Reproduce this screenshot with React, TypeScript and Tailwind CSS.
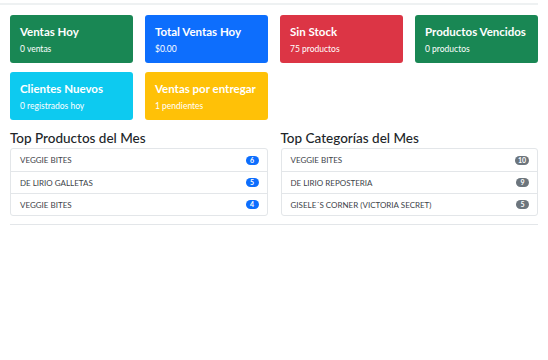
import React from "react";

const cards = [
  { title: "Ventas Hoy", sub: "0 ventas", bg: "bg-[#198754]" },
  { title: "Total Ventas Hoy", sub: "$0.00", bg: "bg-[#0d6efd]" },
  { title: "Sin Stock", sub: "75 productos", bg: "bg-[#dc3545]" },
  { title: "Productos Vencidos", sub: "0 productos", bg: "bg-[#198754]" },
  { title: "Clientes Nuevos", sub: "0 registrados hoy", bg: "bg-[#0dcaf0]" },
  { title: "Ventas por entregar", sub: "1 pendientes", bg: "bg-[#ffc107]" },
];

const topProducts = [
  { name: "VEGGIE BITES", n: 6 },
  { name: "DE LIRIO GALLETAS", n: 5 },
  { name: "VEGGIE BITES", n: 4 },
];

const topCategories = [
  { name: "VEGGIE BITES", n: 10 },
  { name: "DE LIRIO REPOSTERIA", n: 9 },
  { name: "GISELE´S CORNER (VICTORIA SECRET)", n: 5 },
];

function RankList({ title, items, badge }: { title: string; items: { name: string; n: number }[]; badge: string }) {
  return (
    <div>
      <h5 className="text-[13.5px] font-medium leading-[20px] text-[#212529]">{title}</h5>
      <ul className="border border-[#e3e6e9] rounded-[3px] bg-white">
        {items.map((it, i) => (
          <li key={i} className={`flex items-center justify-between h-[22px] pl-[9px] pr-[8px] ${i > 0 ? "border-t border-[#e3e6e9]" : ""}`}>
            <span className="text-[8px] text-[#3d4349]">{it.name}</span>
            <span className={`${badge} text-white text-[7px] font-bold leading-none h-[9px] min-w-[13px] px-[3px] rounded-full flex items-center justify-center`}>{it.n}</span>
          </li>
        ))}
      </ul>
    </div>
  );
}

export default function App() {
  return (
    <div className="w-[548px] h-[360px] bg-white" style={{ fontFamily: 'Lato, "Open Sans", sans-serif' }}>
      <div className="w-[538px] h-[5px] border-b-2 border-[#eef1f2]" />
      <div className="px-[10px] pt-[10px]">
        <div className="grid grid-cols-4 gap-x-[12px] gap-y-[9px]">
          {cards.map((c, i) => (
            <div key={i} className={`${c.bg} h-[48px] rounded-[3px] px-[10px] pt-[9px] text-white`}>
              <p className="text-[11.5px] font-bold leading-[16px] whitespace-nowrap">{c.title}</p>
              <p className="text-[8.5px] leading-[12px] mt-[3px]">{c.sub}</p>
            </div>
          ))}
        </div>
        <div className="grid grid-cols-2 gap-x-[13px] mt-[8px]">
          <RankList title="Top Productos del Mes" items={topProducts} badge="bg-[#0d6efd]" />
          <RankList title="Top Categorías del Mes" items={topCategories} badge="bg-[#6c757d]" />
        </div>
        <div className="mt-[8px] border-t border-[#e3e6e9]" />
      </div>
    </div>
  );
}
